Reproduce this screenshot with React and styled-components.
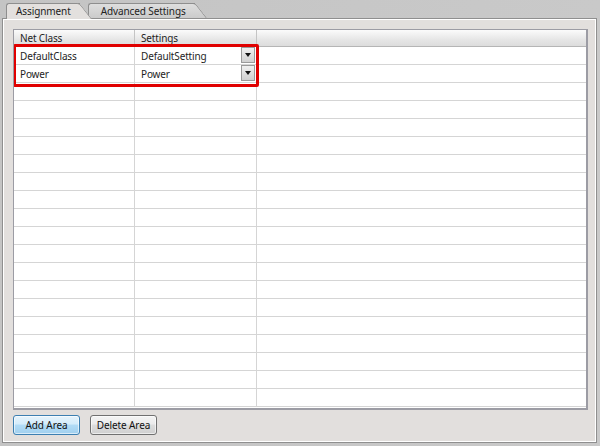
import React from "react";
import styled, { createGlobalStyle } from "styled-components";

const Global = createGlobalStyle`
  html, body { margin: 0; padding: 0; background: #c6c6c6; }
  body { font-family: "Noto Sans", "Open Sans", sans-serif; }
`;

const Page = styled.div`
  width: 600px;
  height: 446px;
  box-sizing: border-box;
  background: linear-gradient(to right, #c4c4c4, #c9c9c9);
  display: flex;
  flex-direction: column;
  padding: 0 3px 3px 2px;
`;

const TabStrip = styled.div`
  height: 18px;
  display: flex;
  align-items: flex-end;
  padding-left: 4px;
  position: relative;
  z-index: 2;
`;

const Tab = styled.div`
  position: relative;
  height: ${(p) => (p.$active ? 16 : 15)}px;
  box-sizing: border-box;
  padding: 0 ${(p) => (p.$active ? 9 : 9)}px 0 ${(p) => (p.$active ? 9 : 12)}px;
  margin-left: ${(p) => (p.$active ? 0 : -2)}px;
  margin-right: 10px;
  font-size: 10px;
  letter-spacing: -0.1px;
  line-height: 14px;
  color: #222;
  border: 1px solid #8e8e8e;
  border-right: none;
  border-bottom: none;
  border-radius: 3px 0 0 0;
  background: ${(p) =>
    p.$active ? "#e3e0de" : "linear-gradient(#dedede, #cbcbcb)"};
  z-index: ${(p) => (p.$active ? 2 : 1)};
  margin-bottom: ${(p) => (p.$active ? -1 : 0)}px;
  &::after {
    content: "";
    position: absolute;
    z-index: -1;
    top: -1px;
    right: -12px;
    width: 14px;
    height: 100%;
    border-top: 1px solid #8e8e8e;
    border-right: 1px solid #8e8e8e;
    border-radius: 0 3px 0 0;
    background: inherit;
    transform: skewX(38deg);
    transform-origin: bottom left;
  }
`;

const Panel = styled.div`
  flex: 1;
  box-sizing: border-box;
  background: #e2dfdd;
  border: 1px solid #8f8f8f;
  box-shadow: inset 1px 1px 0 #ffffff, inset -1px -1px 0 #ffffff;
  padding: 10px 8px 6px 10px;
  display: flex;
  flex-direction: column;
`;

const Grid = styled.div`
  position: relative;
  height: 381px;
  box-sizing: border-box;
  background: #fff;
  border: 1px solid #9c9ca4;
  border-right-width: 2px;
  border-bottom-width: 2px;
  overflow: hidden;
`;

const Row = styled.div`
  display: grid;
  grid-template-columns: 121px 122px 1fr;
  height: ${(p) => (p.$header ? 17 : 18)}px;
  box-sizing: border-box;
  border-bottom: 1px solid ${(p) => (p.$header ? "#b5b5b5" : "#d5d5d5")};
  background: ${(p) => (p.$header ? "linear-gradient(#fbfbfb, #e6e6e6 60%, #dcdcdc)" : "#fff")};
`;

const Cell = styled.div`
  position: relative;
  box-sizing: border-box;
  border-right: 1px solid ${(p) => (p.$header ? "#c4c4c4" : "#d5d5d5")};
  padding-left: 6px;
  font-size: 10px;
  letter-spacing: -0.15px;
  line-height: ${(p) => (p.$header ? 16 : 18)}px;
  color: #1e1e1e;
  white-space: nowrap;
  &:last-child { border-right: none; }
`;

const DropButton = styled.div`
  position: absolute;
  right: 1px;
  top: 0;
  width: 14px;
  height: 16px;
  box-sizing: border-box;
  border: 1px solid #9a9a9a;
  background: linear-gradient(#f0f0f0, #d0d0d0);
  display: flex;
  align-items: center;
  justify-content: center;
  &::before {
    content: "";
    border-left: 3px solid transparent;
    border-right: 3px solid transparent;
    border-top: 4px solid #111;
  }
`;

const Highlight = styled.div`
  position: absolute;
  left: -1px;
  top: 14px;
  width: 246px;
  height: 43px;
  box-sizing: border-box;
  border: 3px solid #e00000;
  border-radius: 2px;
  pointer-events: none;
`;

const ButtonRow = styled.div`
  display: flex;
  gap: 10px;
  margin-top: 5px;
`;

const Button = styled.button`
  width: 67px;
  height: 20px;
  padding: 0;
  font-family: "Noto Sans", "Open Sans", sans-serif;
  font-size: 10px;
  letter-spacing: -0.1px;
  color: #111;
  border-radius: 3px;
  border: 1px solid ${(p) => (p.$primary ? "#3c7fb1" : "#707070")};
  background: ${(p) =>
    p.$primary
      ? "linear-gradient(#e6f4fc 0%, #d4ecfb 45%, #b2dcf6 50%, #a0cfee 100%)"
      : "linear-gradient(#f4f4f4 0%, #ebebeb 45%, #dddddd 50%, #cfcfcf 100%)"};
  box-shadow: inset 0 0 0 1px rgba(255,255,255,0.6);
`;

const rows = [
  ["DefaultClass", "DefaultSetting"],
  ["Power", "Power"],
];

export default function App() {
  const empty = Array.from({ length: 18 });
  return (
    <>
      <Global />
      <Page>
        <TabStrip>
          <Tab $active>Assignment</Tab>
          <Tab>Advanced Settings</Tab>
        </TabStrip>
        <Panel>
          <Grid>
            <Row $header>
              <Cell $header>Net Class</Cell>
              <Cell $header>Settings</Cell>
              <Cell $header />
            </Row>
            {rows.map(([a, b]) => (
              <Row key={a}>
                <Cell>{a}</Cell>
                <Cell>
                  {b}
                  <DropButton />
                </Cell>
                <Cell />
              </Row>
            ))}
            {empty.map((_, i) => (
              <Row key={i}>
                <Cell />
                <Cell />
                <Cell />
              </Row>
            ))}
            <Highlight />
          </Grid>
          <ButtonRow>
            <Button $primary>Add Area</Button>
            <Button>Delete Area</Button>
          </ButtonRow>
        </Panel>
      </Page>
    </>
  );
}
